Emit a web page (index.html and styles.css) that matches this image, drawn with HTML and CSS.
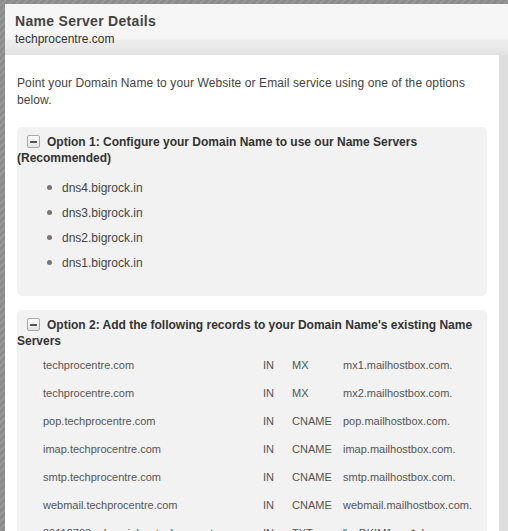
FILE: index.html
```html
<!DOCTYPE html>
<html>
<head>
  <meta charset="UTF-8">
  <title>Name Server Details</title>
  <link rel="stylesheet" href="styles.css">
</head>
<body>
  <div class="modal">
    <div class="modal-head">
      <h2>Name Server Details</h2>
      <p class="domain">techprocentre.com</p>
    </div>
    <div class="modal-body">
      <div class="content">
        <p class="intro">Point your Domain Name to your Website or Email service using one of the options below.</p>

        <div class="option">
          <h3><span class="toggle"></span>Option 1: Configure your Domain Name to use our Name Servers (Recommended)</h3>
          <ul class="ns-list">
            <li>dns4.bigrock.in</li>
            <li>dns3.bigrock.in</li>
            <li>dns2.bigrock.in</li>
            <li>dns1.bigrock.in</li>
          </ul>
        </div>

        <div class="option">
          <h3><span class="toggle"></span>Option 2: Add the following records to your Domain Name's existing Name Servers</h3>
          <table class="records">
            <tr><td>techprocentre.com</td><td>IN</td><td>MX</td><td>mx1.mailhostbox.com.</td></tr>
            <tr><td>techprocentre.com</td><td>IN</td><td>MX</td><td>mx2.mailhostbox.com.</td></tr>
            <tr><td>pop.techprocentre.com</td><td>IN</td><td>CNAME</td><td>pop.mailhostbox.com.</td></tr>
            <tr><td>imap.techprocentre.com</td><td>IN</td><td>CNAME</td><td>imap.mailhostbox.com.</td></tr>
            <tr><td>smtp.techprocentre.com</td><td>IN</td><td>CNAME</td><td>smtp.mailhostbox.com.</td></tr>
            <tr><td>webmail.techprocentre.com</td><td>IN</td><td>CNAME</td><td>webmail.mailhostbox.com.</td></tr>
            <tr><td>20112703._domainkey.techprocentre.com</td><td>IN</td><td>TXT</td><td>"v=DKIM1; g=*; k=rsa;</td></tr>
          </table>
        </div>
      </div>
      <div class="scroll"></div>
    </div>
  </div>
</body>
</html>
```

FILE: styles.css
```css
html, body {
  height: 100%;
}

body {
  margin: 0;
  overflow: hidden;
  font-family: "Liberation Sans", Arial, sans-serif;
  color: #444;
  background: repeating-linear-gradient(135deg, #8c8c8c 0, #8c8c8c 3px, #979797 3px, #979797 5px);
}

.modal {
  margin: 4px 0 0 5px;
  width: 503px;
  height: 600px;
  background: #fff;
}

.modal-head {
  height: 51px;
  box-sizing: border-box;
  padding: 9px 10px 0;
  background: linear-gradient(to bottom, #f6f6f6 0, #f6f6f6 35px, #ededed 36px, #e9e9e9 44px, #e2e2e2 51px);
}

.modal-head h2 {
  margin: 0;
  font-size: 14px;
  line-height: 17px;
  font-weight: bold;
  letter-spacing: 0.3px;
  color: #444;
}

.modal-head .domain {
  margin: 2px 0 0;
  font-size: 12px;
  line-height: 15px;
  color: #333;
}

.modal-body {
  display: flex;
}

.content {
  width: 470px;
  padding: 20px 12px 0;
}

.scroll {
  width: 9px;
  background: #dedede;
}

.intro {
  margin: 0 0 18px;
  font-size: 12px;
  line-height: 17px;
  letter-spacing: 0.1px;
  color: #444;
}

.option {
  background: #f2f2f2;
  border-radius: 5px;
  padding: 7px 0 21px;
  margin-bottom: 14px;
}

.option h3 {
  margin: 0;
  font-size: 12px;
  line-height: 16px;
  font-weight: bold;
  color: #333;
}

.toggle {
  display: inline-block;
  vertical-align: -2px;
  width: 11px;
  height: 11px;
  margin: 0 7px 0 10px;
  border: 1px solid #a8a8a8;
  border-radius: 2px;
  background: linear-gradient(to bottom, #fdfdfd, #e4e4e4);
  position: relative;
}

.toggle::after {
  content: "";
  position: absolute;
  left: 2px;
  top: 5px;
  width: 7px;
  height: 2px;
  background: #555;
}

.ns-list {
  list-style: none;
  margin: 9px 0 0;
  padding: 0 0 0 30px;
}

.ns-list li {
  display: flex;
  align-items: center;
  height: 25px;
  font-size: 12px;
  color: #444;
}

.ns-list li::before {
  content: "";
  width: 5px;
  height: 5px;
  border-radius: 50%;
  background: #777;
  margin-right: 10px;
}

.records {
  margin: 2px 0 0 26px;
  border-collapse: collapse;
  font-size: 11px;
  color: #555;
}

.records td {
  height: 28px;
  padding: 0;
  white-space: nowrap;
}

.records td:nth-child(1) { width: 220px; }
.records td:nth-child(2) { width: 29px; }
.records td:nth-child(3) { width: 51px; }
```
